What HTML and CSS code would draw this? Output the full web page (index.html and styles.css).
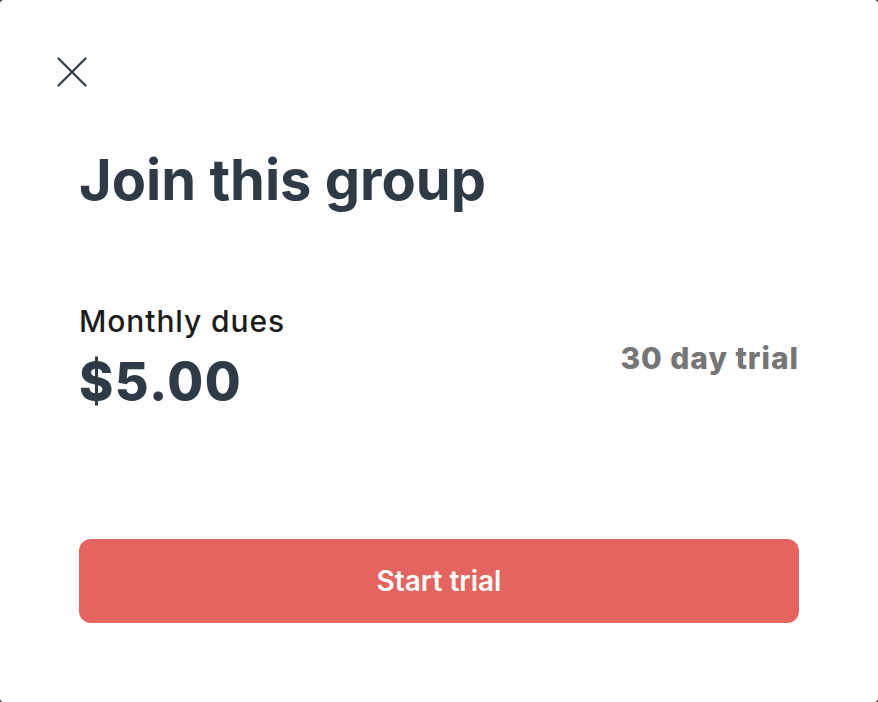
FILE: index.html
```html
<!DOCTYPE html>
<html lang="en">
<head>
    <meta charset="UTF-8">
    <meta name="viewport" content="width=device-width, initial-scale=1.0">
    <title>Join this group</title>
    <link rel="stylesheet" href="styles.css">
</head>
<body>
    <div class="modal">
        <div class="modal-top">
            <button class="close-btn" aria-label="Close">
                <svg width="30" height="30" viewBox="0 0 30 30">
                    <path d="M1.5 1.5 L28.5 28.5 M28.5 1.5 L1.5 28.5" stroke="#2e3b46" stroke-width="2.2" stroke-linecap="round" fill="none"/>
                </svg>
            </button>
        </div>

        <div class="modal-body">
            <h1 class="title">Join this group</h1>

            <div class="dues">
                <div class="dues-info">
                    <div class="dues-label">Monthly dues</div>
                    <div class="dues-price">$5.00</div>
                </div>
                <div class="trial-note">30 day trial</div>
            </div>

            <button class="start-btn">Start trial</button>
        </div>
    </div>
</body>
</html>
```

FILE: styles.css
```css
html, body {
    height: 100%;
}

body {
    margin: 0;
    background-color: #3a3a3a;
    font-family: Inter, "Noto Sans", sans-serif;
}

.modal {
    box-sizing: border-box;
    height: 100%;
    background-color: #fff;
    border-radius: 4px;
    padding-top: 57px;
}

.modal-top {
    padding-left: 57px;
}

.close-btn {
    display: block;
    width: 30px;
    height: 30px;
    padding: 0;
    border: none;
    background: none;
    cursor: pointer;
}

.close-btn svg {
    display: block;
}

.modal-body {
    padding: 0 79px;
}

.title {
    margin: 61px 0 0;
    font-size: 56px;
    line-height: 64px;
    font-weight: 700;
    color: #2e3b46;
}

.dues {
    display: flex;
    align-items: flex-start;
    justify-content: space-between;
    margin-top: 92px;
}

.dues-label {
    font-size: 30px;
    line-height: 34px;
    font-weight: 500;
    letter-spacing: 0.9px;
    color: #1c1c1c;
}

.dues-price {
    margin-top: 14px;
    font-size: 52px;
    line-height: 60px;
    font-weight: 800;
    letter-spacing: 1.5px;
    color: #2e3b46;
}

.trial-note {
    margin-top: 36px;
    font-size: 30px;
    line-height: 36px;
    font-weight: 800;
    letter-spacing: 0.95px;
    color: #757575;
}

.start-btn {
    display: block;
    width: 100%;
    height: 84px;
    margin-top: 127px;
    border: none;
    border-radius: 12px;
    background-color: #e4645f;
    color: #fff;
    font-family: inherit;
    font-size: 28px;
    font-weight: 600;
    cursor: pointer;
}
```
